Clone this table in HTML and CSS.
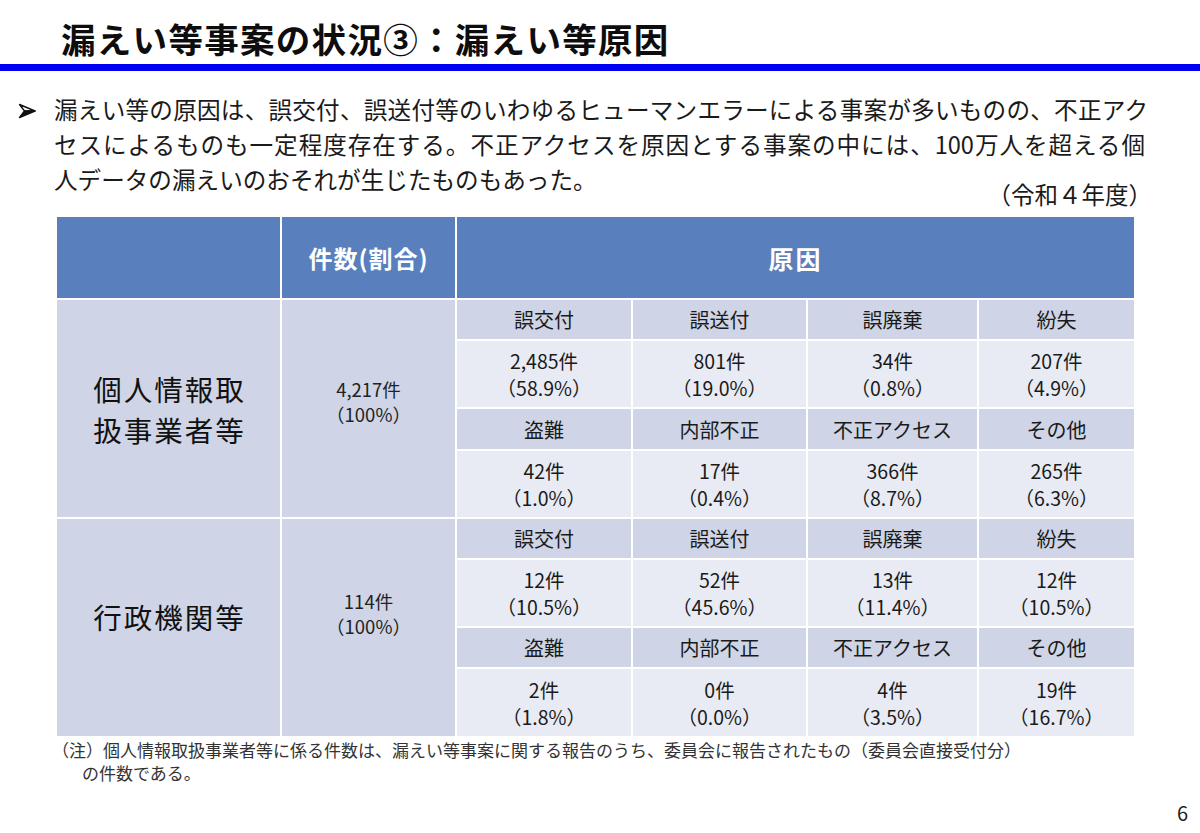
FILE: index.html
```html
<!DOCTYPE html>
<html lang="ja">
<head>
<meta charset="utf-8">
<link rel="stylesheet" href="styles.css">
</head>
<body>
<header class="title-bar">
  <h1 class="title">漏えい等事案の状況③：漏えい等原因</h1>
</header>
<div class="rule"></div>
<main class="content">
  <div class="bullet-row">
    <span class="bullet"><svg class="arrow" width="18" height="16" viewBox="0 0 18 16"><path d="M1.5 1.5 L17 8 L6.5 8 Z" fill="#ffffff" stroke="#111" stroke-width="1.4" stroke-linejoin="round"/><path d="M6.5 8 L17 8 L1.5 14.5 Z" fill="#111" stroke="#111" stroke-width="1.4" stroke-linejoin="round"/></svg></span>
    <p class="lead"><span class="line line-1">漏えい等の原因は、誤交付、誤送付等のいわゆるヒューマンエラーによる事案が多いものの、不正アク</span><span class="line line-2">セスによるものも一定程度存在する。不正アクセスを原因とする事案の中には、100万人を超える個</span><span class="line">人データの漏えいのおそれが生じたものもあった。</span></p>
  </div>
  <div class="year">（令和４年度）</div>
  <div class="grid">
    <div class="hd hd-blank"></div>
    <div class="hd hd-count">件数(割合)</div>
    <div class="hd hd-cause">原因</div>

    <div class="side side-a">個人情報取<br>扱事業者等</div>
    <div class="total total-a">4,217件<br>（100%）</div>
    <div class="lbl">誤交付</div><div class="lbl">誤送付</div><div class="lbl">誤廃棄</div><div class="lbl">紛失</div>
    <div class="val">2,485件<br>（58.9%）</div><div class="val">801件<br>（19.0%）</div><div class="val">34件<br>（0.8%）</div><div class="val">207件<br>（4.9%）</div>
    <div class="lbl">盗難</div><div class="lbl">内部不正</div><div class="lbl">不正アクセス</div><div class="lbl">その他</div>
    <div class="val">42件<br>（1.0%）</div><div class="val">17件<br>（0.4%）</div><div class="val">366件<br>（8.7%）</div><div class="val">265件<br>（6.3%）</div>

    <div class="side side-b">行政機関等</div>
    <div class="total total-b">114件<br>（100%）</div>
    <div class="lbl">誤交付</div><div class="lbl">誤送付</div><div class="lbl">誤廃棄</div><div class="lbl">紛失</div>
    <div class="val">12件<br>（10.5%）</div><div class="val">52件<br>（45.6%）</div><div class="val">13件<br>（11.4%）</div><div class="val">12件<br>（10.5%）</div>
    <div class="lbl">盗難</div><div class="lbl">内部不正</div><div class="lbl">不正アクセス</div><div class="lbl">その他</div>
    <div class="val">2件<br>（1.8%）</div><div class="val">0件<br>（0.0%）</div><div class="val">4件<br>（3.5%）</div><div class="val">19件<br>（16.7%）</div>
  </div>
  <p class="note">（注）個人情報取扱事業者等に係る件数は、漏えい等事案に関する報告のうち、委員会に報告されたもの（委員会直接受付分）<br><span class="indent">の件数である。</span></p>
</main>
<footer class="page-no">6</footer>
</body>
</html>
```

FILE: styles.css
```css
html, body {
  margin: 0;
  padding: 0;
  background: #ffffff;
}
body {
  width: 1200px;
  height: 833px;
  overflow: hidden;
  font-family: "Noto Sans CJK JP", "Noto Sans", sans-serif;
  color: #1a1a1a;
  position: relative;
}
.title-bar {
  height: 64px;
  display: flex;
  align-items: center;
  padding-left: 61px;
}
.title {
  margin: 0;
  font-size: 34.5px;
  font-weight: 700;
  letter-spacing: 1.3px;
  color: #0d0d0d;
  line-height: 1;
  padding-top: 12px;
}
.rule {
  height: 7px;
  background: #0000f5;
}
.bullet-row {
  display: flex;
  margin-top: 21px;
}
.bullet {
  width: 54px;
  height: 35px;
  padding-left: 18px;
  box-sizing: border-box;
  display: flex;
  align-items: center;
}
.arrow {
  display: block;
  margin-top: 2px;
}
.lead {
  margin: 0;
  font-size: 23.6px;
  line-height: 35px;
  color: #1a1a1a;
  white-space: nowrap;
}
.line {
  display: block;
}
.line-1 {
  width: 1094px;
  text-align: justify;
  text-align-last: justify;
}
.line-2 {
  width: 1091px;
  text-align: justify;
  text-align-last: justify;
}
.year {
  text-align: right;
  width: 1152px;
  font-size: 23.5px;
  line-height: 24px;
  margin-top: -15px;
  color: #1a1a1a;
}
.grid {
  margin: 11px 0 0 57px;
  width: 1077px;
  display: grid;
  grid-template-columns: 223px 173px 174px 173px 169px 155px;
  grid-template-rows: 81px 39px 66px 40px 66px 39px 66px 39px 67px;
  gap: 2px;
  background: #ffffff;
}
.grid > div {
  display: flex;
  align-items: center;
  justify-content: center;
  text-align: center;
}
.hd {
  background: #5a7fbd;
  color: #ffffff;
  font-weight: 700;
  font-size: 24px;
}
.hd-count {
  letter-spacing: 1px;
}
.hd-cause {
  grid-column: 3 / 7;
  font-size: 25px;
  letter-spacing: 2px;
}
.side, .total {
  background: #cfd5e6;
}
.side {
  font-size: 28.5px;
  line-height: 41px;
  letter-spacing: 2px;
  padding-left: 2px;
  color: #111;
}
.side-a { grid-column: 1; grid-row: 2 / 6; }
.total-a { grid-column: 2; grid-row: 2 / 6; padding-bottom: 14px; }
.side-b { grid-column: 1; grid-row: 6 / 10; padding-bottom: 22px; }
.total-b { grid-column: 2; grid-row: 6 / 10; padding-bottom: 28px; }
.total {
  font-size: 18.5px;
  line-height: 25px;
  color: #222;
}
.lbl {
  background: #cfd5e6;
  font-size: 20px;
  color: #1a1a1a;
}
.val {
  background: #e8ebf3;
  font-size: 19.5px;
  line-height: 27px;
  color: #1a1a1a;
}
.note {
  margin: 4px 0 0 52px;
  font-family: "Liberation Serif", "Noto Sans CJK JP", serif;
  font-size: 17px;
  line-height: 23px;
  color: #333;
}
.indent {
  padding-left: 30px;
}
.page-no {
  position: absolute;
  right: 12px;
  top: 798px;
  font-size: 20px;
  color: #222;
}
```
